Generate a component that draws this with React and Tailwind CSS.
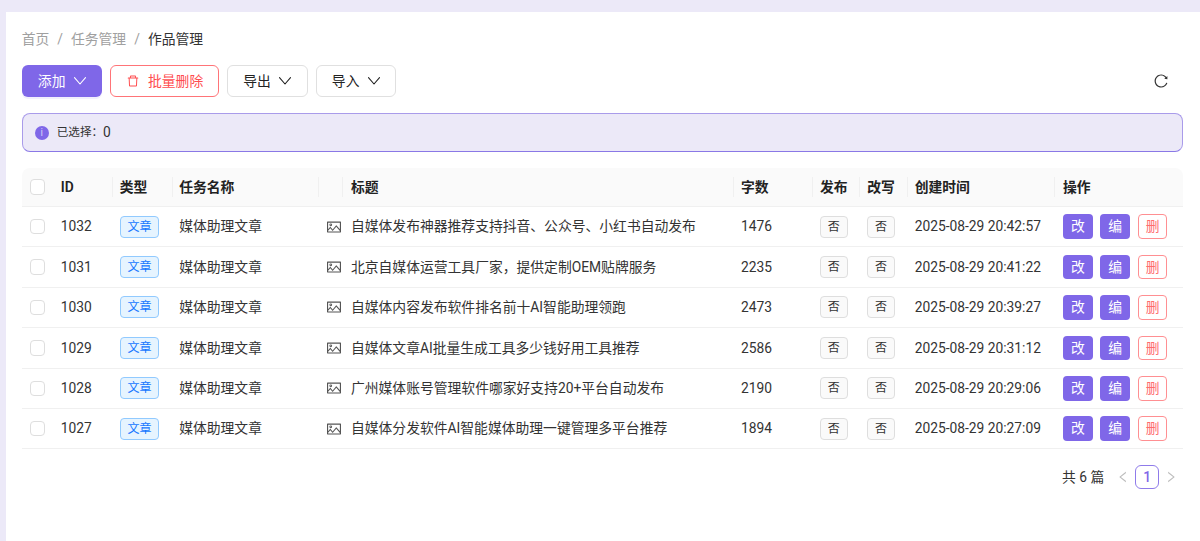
import React from "react";
import { AiOutlineReload, AiOutlineDelete, AiOutlinePicture, AiOutlineLeft, AiOutlineRight } from "react-icons/ai";

const rows = [
  ["1032", "自媒体发布神器推荐支持抖音、公众号、小红书自动发布", "1476", "2025-08-29 20:42:57"],
  ["1031", "北京自媒体运营工具厂家，提供定制OEM贴牌服务", "2235", "2025-08-29 20:41:22"],
  ["1030", "自媒体内容发布软件排名前十AI智能助理领跑", "2473", "2025-08-29 20:39:27"],
  ["1029", "自媒体文章AI批量生成工具多少钱好用工具推荐", "2586", "2025-08-29 20:31:12"],
  ["1028", "广州媒体账号管理软件哪家好支持20+平台自动发布", "2190", "2025-08-29 20:29:06"],
  ["1027", "自媒体分发软件AI智能媒体助理一键管理多平台推荐", "1894", "2025-08-29 20:27:09"],
];

const Chevron = () => (
  <svg viewBox="0 0 12 12" className="w-3 h-3" fill="none" stroke="currentColor" strokeWidth="1.1" strokeLinecap="round" strokeLinejoin="round">
    <path d="M0.5 2.6 L6 9 L11.5 2.6" />
  </svg>
);

const Check = () => <span className="block w-[15.5px] h-[15.5px] rounded-[4px] border border-[#dedede] bg-white" />;

const Th = ({ className = "", children, divider = true }) => (
  <div className={`relative flex items-center h-full pl-2 font-semibold text-[#222] ${className}`}>
    {divider && <span className="absolute left-0 top-[9px] bottom-[9px] w-px bg-[#f0f0f0]" />}
    {children}
  </div>
);

const OutlineBtn = ({ label }) => (
  <button className="flex items-center justify-center gap-[8.7px] w-[80.7px] h-8 ml-2 rounded-md border border-[#e0e0e0] bg-white text-[#222]">
    <span>{label}</span>
    <Chevron />
  </button>
);

const No = () => (
  <span className="flex items-center justify-center w-[27.6px] h-[22px] rounded border border-[#dedede] bg-[#fafafa] text-xs text-[#333]">否</span>
);

const gridCols = "grid grid-cols-[31px_59px_60px_146.6px_24px_390.7px_79px_47.3px_47.4px_147.6px_129px] items-center";

export default function App() {
  return (
    <div className="h-[541px] w-[1200px] overflow-hidden bg-[#ece9f8] pl-[6px] pt-3 text-[13.8px] text-[#333] font-['Roboto','Noto_Sans_CJK_SC',sans-serif]">
      <div className="h-full bg-white pl-[15.7px] pr-[16.7px] pt-[17px]">
        <nav className="flex items-center h-5 gap-2 text-[#a0a0a0]">
          <span>首页</span>
          <span>/</span>
          <span>任务管理</span>
          <span>/</span>
          <span className="text-[#333]">作品管理</span>
        </nav>

        <div className="flex items-center mt-4 h-8">
          <button className="flex items-center justify-center gap-[8.7px] w-[80.6px] h-8 rounded-md bg-[#7f67e8] text-white shadow-[0_2px_0_rgba(127,103,232,0.1)]">
            <span>添加</span>
            <Chevron />
          </button>
          <button className="flex items-center justify-center gap-2 w-[108.7px] h-8 ml-2 rounded-md border border-[#ff7478] bg-white text-[#ff4d4f]">
            <AiOutlineDelete className="w-[14px] h-[14px]" />
            <span>批量删除</span>
          </button>
          <OutlineBtn label="导出" />
          <OutlineBtn label="导入" />
          <AiOutlineReload className="ml-auto mr-[14px] w-4 h-4 text-[#333]" />
        </div>

        <div className="flex items-center gap-2 h-[39px] mt-4 px-3 rounded-lg border border-[#a99bea] border-b-[#8a78e6] bg-[#ece9f8]">
          <span className="flex items-center justify-center w-[14px] h-[14px] rounded-full bg-[#7f67e8] text-[#d8d0f8] text-[10px] leading-none font-normal">i</span>
          <span className="flex items-center text-[#333]">
            <span className="text-[11.6px]">已选择：</span>
            <span>0</span>
          </span>
        </div>

        <div className="mt-4 w-[1161.6px]">
          <div className={`${gridCols} h-[39px] rounded-t-lg bg-[#fafafa] border-b border-[#f0f0f0]`}>
            <div className="pl-2 flex items-center"><Check /></div>
            <Th divider={false}>ID</Th>
            <Th>类型</Th>
            <Th className="pl-[7.5px]">任务名称</Th>
            <Th />
            <Th className="pl-[8.7px]">标题</Th>
            <Th>字数</Th>
            <Th>发布</Th>
            <Th>改写</Th>
            <Th>创建时间</Th>
            <Th className="pl-[8.7px]">操作</Th>
          </div>

          {rows.map((r) => (
            <div key={r[0]} className={`${gridCols} h-[40.4px] border-b border-[#f0f0f0]`}>
              <div className="pl-2 flex items-center"><Check /></div>
              <div className="pl-2">{r[0]}</div>
              <div className="pl-2">
                <span className="flex items-center justify-center w-[39.4px] h-[22px] rounded border border-[#91caff] bg-[#e6f4ff] text-[#1677ff] text-xs">文章</span>
              </div>
              <div className="pl-[7.5px]">媒体助理文章</div>
              <div className="pl-2 flex items-center"><AiOutlinePicture className="w-4 h-4 text-[#555]" /></div>
              <div className="pl-[8.7px] whitespace-nowrap">{r[1]}</div>
              <div className="pl-2">{r[2]}</div>
              <div className="pl-2"><No /></div>
              <div className="pl-2"><No /></div>
              <div className="pl-2 whitespace-nowrap">{r[3]}</div>
              <div className="pl-[8.7px] flex items-center gap-[7.7px]">
                <button className="flex items-center justify-center w-[29.7px] h-[24.6px] rounded bg-[#7f67e8] text-white">改</button>
                <button className="flex items-center justify-center w-[29.7px] h-[24.6px] rounded bg-[#7f67e8] text-white">编</button>
                <button className="flex items-center justify-center w-[29.7px] h-[24.6px] rounded border border-[#ff8f92] bg-white text-[#ff6b6e]">删</button>
              </div>
            </div>
          ))}

          <div className="flex items-center justify-end mt-4 h-6 pr-[5px]">
            <span className="text-[#333] mr-3">共 6 篇</span>
            <AiOutlineLeft className="w-[14px] h-[14px] text-[#bdbdbd]" />
            <span className="flex items-center justify-center w-6 h-6 mx-[5px] rounded-md border border-[#8f7bea] text-[#7f67e8] font-medium">1</span>
            <AiOutlineRight className="w-[14px] h-[14px] text-[#bdbdbd]" />
          </div>
        </div>
      </div>
    </div>
  );
}
